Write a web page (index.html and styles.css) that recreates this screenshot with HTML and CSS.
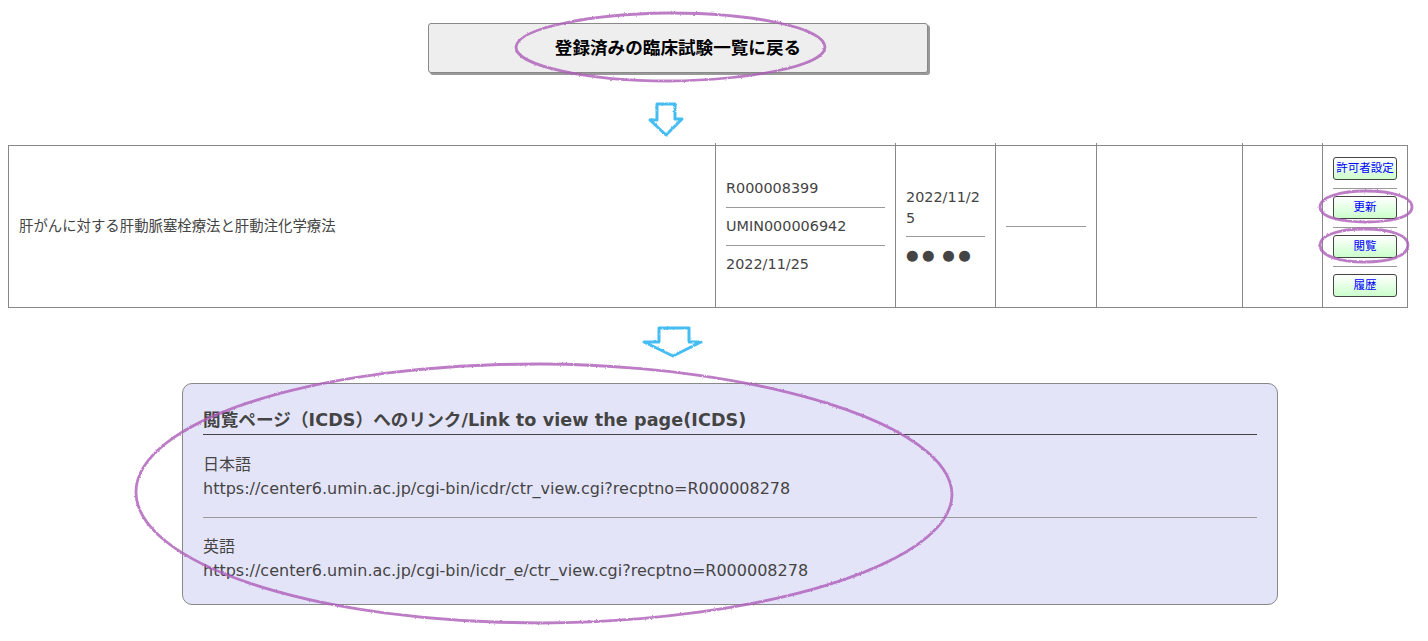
FILE: index.html
```html
<!DOCTYPE html>
<html lang="ja">
<head>
<meta charset="utf-8">
<title>登録済みの臨床試験一覧に戻る</title>
<link rel="stylesheet" href="styles.css">
</head>
<body>
<main class="page">
  <a class="back-button">登録済みの臨床試験一覧に戻る</a>

  <table class="trials">
    <colgroup>
      <col class="c-title"><col class="c-ids"><col class="c-date"><col class="c-blank1"><col class="c-blank2"><col class="c-blank3"><col class="c-actions">
    </colgroup>
    <thead>
      <tr class="ticks"><th></th><th></th><th></th><th></th><th></th><th></th><th></th></tr>
    </thead>
    <tbody>
      <tr>
        <td>肝がんに対する肝動脈塞栓療法と肝動注化学療法</td>
        <td>
          <div>R000008399</div><hr class="rule">
          <div>UMIN000006942</div><hr class="rule">
          <div>2022/11/25</div>
        </td>
        <td>
          <div class="breakable">2022/11/25</div><hr class="rule rule-tight">
          <div class="masked">●● ●●</div>
        </td>
        <td><hr class="rule"></td>
        <td></td>
        <td></td>
        <td class="actions">
          <a class="mini-button">許可者設定</a><hr class="rule rule-a">
          <a class="mini-button">更新</a><hr class="rule rule-a">
          <a class="mini-button">閲覧</a><hr class="rule rule-a">
          <a class="mini-button">履歴</a>
        </td>
      </tr>
    </tbody>
  </table>

  <section class="panel">
    <h2 class="panel-title">閲覧ページ（ICDS）へのリンク/Link to view the page(ICDS)</h2>
    <p class="link-block link-first">日本語<br>https://center6.umin.ac.jp/cgi-bin/icdr/ctr_view.cgi?recptno=R000008278</p>
    <hr class="panel-rule">
    <p class="link-block">英語<br>https://center6.umin.ac.jp/cgi-bin/icdr_e/ctr_view.cgi?recptno=R000008278</p>
  </section>
</main>

<svg class="marks" width="1428" height="641" viewBox="0 0 1428 641" aria-hidden="true">
  <defs>
    <filter id="crayon" x="-5%" y="-5%" width="110%" height="110%">
      <feTurbulence type="fractalNoise" baseFrequency="0.45" numOctaves="2" seed="4" result="n"/>
      <feDisplacementMap in="SourceGraphic" in2="n" scale="2.2" xChannelSelector="R" yChannelSelector="G"/>
    </filter>
  </defs>
  <g class="ring" filter="url(#crayon)">
    <path d="M516 47 C518 28 590 14 668 13 C750 13 824 27 825 47 C825 66 750 80 668 81 C590 81 515 66 516 47 Z"/>
    <path d="M1320 207 C1320 197 1340 191 1366 191 C1392 191 1412 197 1412 207 C1412 217 1392 222 1366 222 C1340 222 1320 217 1320 207 Z"/>
    <path d="M1320 245 C1320 235 1340 229 1364 229 C1390 229 1408 235 1408 245 C1408 256 1390 262 1364 262 C1340 262 1320 256 1320 245 Z"/>
    <path d="M136 492 C136 425 300 364 540 364 C760 365 952 425 952 495 C950 565 760 622 540 623 C300 622 136 560 136 492 Z"/>
  </g>
  <g class="arrow" filter="url(#crayon)">
    <path d="M657 104 H675 V119 H682 L666 135 L650 120 H657 Z"/>
    <path d="M659 328 H689 V342 H701 L673 356 L644 342 H659 Z"/>
  </g>
</svg>
</body>
</html>
```

FILE: styles.css
```css
html, body {
  margin: 0;
  padding: 0;
  background: #fff;
}

body {
  font-family: "DejaVu Sans", "Noto Sans CJK JP", sans-serif;
  color: #444;
  font-size: 14.4px;
  height: 641px;
  overflow: hidden;
}

.page {
  padding: 23px 20px 0 8px;
}

.back-button {
  display: flex;
  align-items: center;
  justify-content: center;
  box-sizing: border-box;
  width: 500px;
  height: 50px;
  margin-left: 420px;
  padding-bottom: 4px;
  background: #eee;
  border: 1px solid #888;
  border-radius: 3px;
  box-shadow: 2px 2px 0 #999;
  color: #000;
  font-size: 17.6px;
  font-weight: bold;
  font-family: "Noto Sans CJK JP", sans-serif;
}

.trials {
  table-layout: fixed;
  width: 1399px;
  margin-top: 70px;
  border-collapse: collapse;
}

.c-title { width: 707px; }
.c-ids { width: 180px; }
.c-date { width: 100px; }
.c-blank1 { width: 101px; }
.c-blank2 { width: 146px; }
.c-blank3 { width: 80px; }
.c-actions { width: 85px; }

.ticks th {
  height: 2px;
  padding: 0;
  border-left: 1px solid #888;
  border-right: 1px solid #888;
}

.ticks th:first-child,
.ticks th:last-child {
  border-left: 0;
  border-right: 0;
}

.ticks th:nth-child(2) { border-left: 1px solid #888; }

.trials td {
  height: 141px;
  padding: 10px;
  border: 1px solid #888;
  vertical-align: middle;
  line-height: 21px;
  font-size: 14.4px;
}

.breakable {
  word-break: break-all;
}

.masked {
  letter-spacing: 3.5px;
  word-spacing: -4px;
}

.rule {
  height: 1px;
  margin: 8px 0;
  border: 0;
  background: #999;
}

.rule-tight {
  margin: 7px 0 8px;
}

.trials .actions {
  text-align: center;
  padding: 10px 10px;
}

.rule-a {
  margin: 8px 0 7px;
}

.mini-button {
  display: flex;
  align-items: center;
  justify-content: center;
  box-sizing: border-box;
  width: 64px;
  height: 23px;
  border: 1px solid #444;
  border-radius: 3px;
  background: linear-gradient(#fff, #ccffcc);
  color: #00f;
  font-size: 11.5px;
  line-height: 1;
  font-family: "Noto Sans CJK JP", sans-serif;
}

.panel {
  box-sizing: border-box;
  width: 1096px;
  height: 222px;
  margin: 75px 0 0 174px;
  padding: 20px;
  background: #e4e4f9;
  border: 1px solid #888;
  border-radius: 10px;
}

.panel-title {
  margin: 4px 0 0;
  padding-bottom: 1px;
  border-bottom: 1px solid #444;
  font-size: 17.6px;
  letter-spacing: 0.06px;
  line-height: 25px;
  font-weight: bold;
}

.link-block {
  margin: 17px 0 0;
  font-size: 16px;
  line-height: 24px;
}

.link-first {
  margin-top: 18px;
}

.panel-rule {
  height: 1px;
  margin: 16px 0 0;
  border: 0;
  background: #999;
}

.marks {
  position: absolute;
  left: 0;
  top: 0;
  pointer-events: none;
}

.ring path {
  fill: none;
  stroke: #ad5cb8;
  stroke-width: 2.8;
  opacity: 0.8;
}

.arrow path {
  fill: #fff;
  stroke: #45bdf2;
  stroke-width: 3;
  stroke-linejoin: round;
}
```
